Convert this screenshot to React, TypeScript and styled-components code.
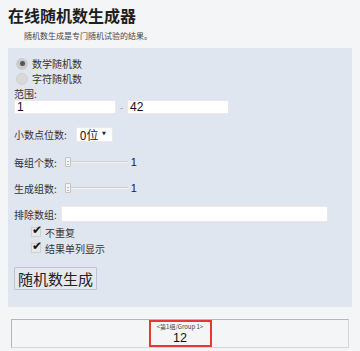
import React from "react";
import styled, { createGlobalStyle } from "styled-components";

const Global = createGlobalStyle`
  html, body { margin: 0; padding: 0; background: #f4f5f7; }
  body { font-family: "Noto Sans CJK SC", "Noto Sans", sans-serif; color: #333; }
  * { box-sizing: border-box; }
`;

const Page = styled.div`
  width: 360px;
  height: 351px;
  overflow: hidden;
  background: #f4f5f7;
`;

const Title = styled.h1`
  margin: 0;
  padding: 5px 8px 0;
  font-size: 16px;
  line-height: 20px;
  font-weight: 700;
  color: #1e1e1e;
`;

const Subtitle = styled.p`
  margin: 5px 0 0 24px;
  font-size: 8px;
  line-height: 12px;
  color: #444;
`;

const Panel = styled.div`
  margin: 6px 8px 0;
  background: #e0e6ef;
  padding: 8px 6px 17px;
  display: flex;
  flex-direction: column;
`;

const RadioRow = styled.label`
  display: flex;
  align-items: center;
  height: 15px;
  font-size: 10px;
  color: #333;
  padding-left: 2px;
`;

const RadioDot = styled.span<{ $on?: boolean }>`
  width: 12px;
  height: 12px;
  border-radius: 50%;
  background: ${(p) => (p.$on ? "#cacaca" : "#d9d9d9")};
  border: 1px solid #d0d0d0;
  display: flex;
  align-items: center;
  justify-content: center;
  margin-right: 4px;
  &::after {
    content: "";
    width: 5px;
    height: 5px;
    border-radius: 50%;
    background: ${(p) => (p.$on ? "#555" : "transparent")};
  }
`;

const SmallLabel = styled.div<{ $mt?: number }>`
  font-size: 10px;
  line-height: 13px;
  color: #333;
  margin-top: ${(p) => p.$mt ?? 0}px;
`;

const Row = styled.div<{ $mt: number; $h?: number }>`
  display: flex;
  align-items: center;
  height: ${(p) => p.$h ?? 14}px;
  margin-top: ${(p) => p.$mt}px;
  font-size: 10px;
  color: #333;
`;

const TextBox = styled.div<{ $w: number }>`
  width: ${(p) => p.$w}px;
  height: 14px;
  background: #fff;
  border: 1px solid #eee4ea;
  font-size: 12px;
  line-height: 12px;
  padding-left: 2px;
  color: #111;
  font-family: "Liberation Sans", Arial, sans-serif;
`;

const Dash = styled.span`
  width: 11px;
  text-align: center;
  color: #888;
  font-size: 9px;
`;

const Select = styled.div`
  margin-left: 9px;
  width: 37px;
  height: 15px;
  background: #fff;
  border: 1px solid #e9e9e9;
  display: flex;
  align-items: center;
  padding-left: 3px;
  font-size: 12px;
  color: #222;
  position: relative;
`;

const Caret = styled.span`
  position: absolute;
  right: 6px;
  top: 2px;
  font-size: 5px;
  line-height: 6px;
  color: #222;
  font-family: "DejaVu Sans", sans-serif;
`;

const Slider = styled.div`
  margin-left: 8px;
  width: 63px;
  height: 10px;
  position: relative;
  display: flex;
  align-items: center;
  &::before {
    content: "";
    flex: 1;
    height: 1px;
    background: #cfcfcf;
    border-bottom: 1px solid #f2f2f2;
  }
`;

const Thumb = styled.span`
  position: absolute;
  left: 0;
  top: 0;
  width: 6px;
  height: 10px;
  background: #f3f3f3;
  border: 1px solid #c4c4c4;
  border-radius: 1px;
  &::after {
    content: "";
    position: absolute;
    left: 1px;
    right: 1px;
    top: 3px;
    height: 2px;
    border-top: 1px solid #bbb;
    border-bottom: 1px solid #bbb;
  }
`;

const Value = styled.span`
  margin-left: 3px;
  font-size: 11px;
  color: #222;
  font-family: "Liberation Sans", Arial, sans-serif;
`;

const ExcludeBox = styled(TextBox)`
  height: 16px;
  margin-left: 4px;
`;

const CheckRow = styled.label<{ $mt: number }>`
  display: flex;
  align-items: center;
  height: 16px;
  margin-top: ${(p) => p.$mt}px;
  padding-left: 17px;
  font-size: 10px;
  color: #333;
`;

const CheckBox = styled.span`
  width: 10px;
  height: 10px;
  background: #e8e8e8;
  border: 1px solid #cfcfcf;
  position: relative;
  margin-right: 4px;
  &::after {
    content: "✔";
    position: absolute;
    left: 0px;
    top: -5px;
    font-size: 12px;
    color: #111;
    font-family: "DejaVu Sans", sans-serif;
  }
`;

const Button = styled.button`
  align-self: flex-start;
  margin-top: 11px;
  height: 23px;
  padding: 0 3px;
  background: #e7e8ee;
  border: 1px solid #b9c3d9;
  border-radius: 1px;
  font-family: "Noto Sans CJK SC", sans-serif;
  font-size: 15px;
  line-height: 19px;
  white-space: nowrap;
  color: #222;
`;

const ResultBox = styled.div`
  margin: 12px 11px 0;
  height: 29px;
  border: 1px solid #b3b6bb;
  border-right-color: #d5d7db;
  border-bottom-color: #d5d7db;
  display: flex;
  justify-content: center;
  align-items: center;
`;

const GroupCard = styled.div`
  width: 63px;
  height: 27px;
  border: 2px solid #e53935;
  display: flex;
  flex-direction: column;
  align-items: center;
`;

const GroupName = styled.span`
  font-size: 6px;
  line-height: 9px;
  color: #444;
`;

const GroupNum = styled.span`
  font-size: 12.5px;
  line-height: 14px;
  color: #111;
  font-family: "Liberation Sans", Arial, sans-serif;
`;

export default function App() {
  return (
    <Page>
      <Global />
      <Title>在线随机数生成器</Title>
      <Subtitle>随机数生成是专门随机试验的结果。</Subtitle>
      <Panel>
        <RadioRow>
          <RadioDot $on />
          数学随机数
        </RadioRow>
        <RadioRow>
          <RadioDot />
          字符随机数
        </RadioRow>
        <SmallLabel $mt={1}>范围:</SmallLabel>
        <Row $mt={0}>
          <TextBox $w={102}>1</TextBox>
          <Dash>-</Dash>
          <TextBox $w={102}>42</TextBox>
        </Row>
        <Row $mt={13} $h={15}>
          小数点位数:
          <Select>
            0位<Caret>▼</Caret>
          </Select>
        </Row>
        <Row $mt={13}>
          每组个数:
          <Slider>
            <Thumb />
          </Slider>
          <Value>1</Value>
        </Row>
        <Row $mt={12}>
          生成组数:
          <Slider>
            <Thumb />
          </Slider>
          <Value>1</Value>
        </Row>
        <Row $mt={11} $h={16}>
          排除数组:
          <ExcludeBox $w={267} />
        </Row>
        <CheckRow $mt={2}>
          <CheckBox />
          不重复
        </CheckRow>
        <CheckRow $mt={0}>
          <CheckBox />
          结果单列显示
        </CheckRow>
        <Button>随机数生成</Button>
      </Panel>
      <ResultBox>
        <GroupCard>
          <GroupName>&lt;第1组/Group 1&gt;</GroupName>
          <GroupNum>12</GroupNum>
        </GroupCard>
      </ResultBox>
    </Page>
  );
}
